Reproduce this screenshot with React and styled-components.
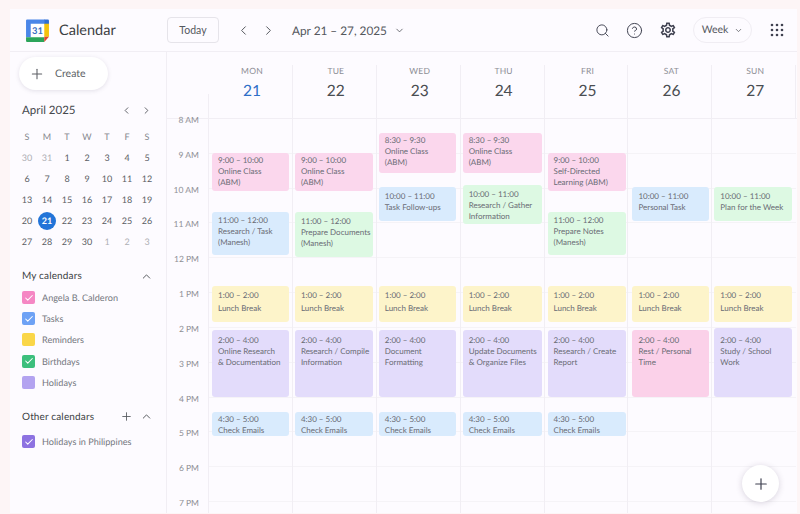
import React from "react"
import styled, { createGlobalStyle } from "styled-components"
import { ChevronLeft, ChevronRight, ChevronDown, ChevronUp, Plus, Search, CircleHelp, Check } from "lucide-react"
import { MdOutlineSettings } from "react-icons/md"

const PINK = "#fbd7ed"
const BLUE = "#d9ebfd"
const GREEN = "#ddf9e3"
const YELLOW = "#fdf4ca"
const PURPLE = "#e3dcfb"

const HOUR = 34.82
const hours = ["8 AM", "9 AM", "10 AM", "11 AM", "12 PM", "1 PM", "2 PM", "3 PM", "4 PM", "5 PM", "6 PM", "7 PM"]

const lunch = { top: 167, height: 36, color: YELLOW, lines: ["1:00 – 2:00", "Lunch Break"], gap: 2, pad: 4 }
const emails = { top: 293, height: 24, color: BLUE, lines: ["4:30 – 5:00", "Check Emails"], pad: 2 }
const work = (color, a, b, top = 211, height = 67, pad = 5) => ({
  top, height, color, lines: ["2:00 – 4:00", a, b], pad
})

const days = [
  {
    name: "MON", num: 21, today: true, left: 3, right: 4,
    events: [
      { top: 34, height: 38, color: PINK, lines: ["9:00 – 10:00", "Online Class", "(ABM)"], pad: 2 },
      { top: 93, height: 43, color: BLUE, lines: ["11:00 – 12:00", "Research / Task", "(Manesh)"], pad: 3 },
      lunch, work(PURPLE, "Online Research", "& Documentation"), emails
    ]
  },
  {
    name: "TUE", num: 22, left: 2, right: 4,
    events: [
      { top: 34, height: 38, color: PINK, lines: ["9:00 – 10:00", "Online Class", "(ABM)"], pad: 2 },
      { top: 93, height: 45, color: GREEN, lines: ["11:00 – 12:00", "Prepare Documents", "(Manesh)"], pad: 4 },
      lunch, work(PURPLE, "Research / Compile", "Information"), emails
    ]
  },
  {
    name: "WED", num: 23, left: 2, right: 5,
    events: [
      { top: 14, height: 40, color: PINK, lines: ["8:30 – 9:30", "Online Class", "(ABM)"], pad: 2 },
      { top: 68, height: 34, color: BLUE, lines: ["10:00 – 11:00", "Task Follow-ups"], pad: 4 },
      lunch, work(PURPLE, "Document", "Formatting"), emails
    ]
  },
  {
    name: "THU", num: 24, left: 2, right: 3,
    events: [
      { top: 14, height: 40, color: PINK, lines: ["8:30 – 9:30", "Online Class", "(ABM)"], pad: 2 },
      { top: 66, height: 39, color: GREEN, lines: ["10:00 – 11:00", "Research / Gather", "Information"], pad: 4 },
      lunch, work(PURPLE, "Update Documents", "& Organize Files"), emails
    ]
  },
  {
    name: "FRI", num: 25, left: 3, right: 2,
    events: [
      { top: 34, height: 38, color: PINK, lines: ["9:00 – 10:00", "Self-Directed", "Learning (ABM)"], pad: 2 },
      { top: 93, height: 43, color: GREEN, lines: ["11:00 – 12:00", "Prepare Notes", "(Manesh)"], pad: 3 },
      lunch, work(PURPLE, "Research / Create", "Report"), emails
    ]
  },
  {
    name: "SAT", num: 26, left: 4, right: 3,
    events: [
      { top: 68, height: 34, color: BLUE, lines: ["10:00 – 11:00", "Personal Task"], pad: 4 },
      lunch, work("#fbd1e9", "Rest / Personal", "Time")
    ]
  },
  {
    name: "SUN", num: 27, left: 2, right: 4,
    events: [
      { top: 68, height: 34, color: GREEN, lines: ["10:00 – 11:00", "Plan for the Week"], pad: 4 },
      lunch, work(PURPLE, "Study / School", "Work", 209, 69, 7)
    ]
  }
]

const miniWeeks = [
  [30, 31, 1, 2, 3, 4, 5],
  [6, 7, 8, 9, 10, 11, 12],
  [13, 14, 15, 16, 17, 18, 19],
  [20, 21, 22, 23, 24, 25, 26],
  [27, 28, 29, 30, 1, 2, 3]
]

const myCalendars = [
  { label: "Angela B. Calderon", color: "#f587c4", checked: true },
  { label: "Tasks", color: "#6ea2f5", checked: true },
  { label: "Reminders", color: "#fad648" },
  { label: "Birthdays", color: "#3cbf7c", checked: true },
  { label: "Holidays", color: "#b3a3f0" }
]

const GlobalStyle = createGlobalStyle`
  html, body {
    margin: 0;
    height: 100%;
    overflow: hidden;
  }
  body {
    background: #fdf5f6;
    font-family: "Lato", "Noto Sans", sans-serif;
    text-rendering: geometricPrecision;
    color: #3c4043;
  }
`

const Page = styled.div`
  box-sizing: border-box;
  width: 800px;
  height: 514px;
  padding: 9px 3px 1px 10px;
`

const Frame = styled.div`
  height: 100%;
  display: flex;
  flex-direction: column;
  background: #fdfbff;
  overflow: hidden;
  position: relative;
`

const TopBar = styled.header`
  flex: 0 0 43px;
  box-sizing: border-box;
  display: flex;
  align-items: center;
  border-bottom: 1px solid #f1eef4;
  padding: 0 13px 0 15px;
`

const Brand = styled.div`
  width: 142px;
  display: flex;
  align-items: center;
  gap: 9px;
  font-size: 14.5px;
  color: #3c4043;
`

const TodayButton = styled.button`
  width: 52px;
  height: 26px;
  margin-right: 12px;
  padding: 0;
  background: transparent;
  border: 1px solid #e6e4ea;
  border-radius: 4px;
  font: inherit;
  font-size: 10.5px;
  color: #55585e;
`

const IconButton = styled.span`
  width: ${props => props.$width || 25}px;
  display: flex;
  justify-content: center;
  align-items: center;
  color: ${props => props.$color || "#55585e"};
`

const DateRange = styled.div`
  margin-left: 11px;
  width: 100px;
  font-size: 11.8px;
  color: #55585e;
  white-space: nowrap;
`

const Spacer = styled.div`
  flex: 1;
`

const WeekPill = styled.div`
  box-sizing: border-box;
  width: 59px;
  height: 26px;
  margin: 0 18px 0 7px;
  display: flex;
  align-items: center;
  justify-content: center;
  gap: 6px;
  border: 1px solid #f0edf3;
  border-radius: 13px;
  font-size: 10.5px;
  color: #55585e;
`

const Body = styled.div`
  flex: 1;
  display: flex;
  min-height: 0;
`

const Sidebar = styled.aside`
  flex: 0 0 157px;
  min-width: 0;
  box-sizing: border-box;
  border-right: 1px solid #f1eef4;
  padding: 5px 10px 0 9px;
`

const CreateButton = styled.div`
  width: 89px;
  height: 33px;
  display: flex;
  align-items: center;
  gap: 10px;
  padding-left: 10px;
  box-sizing: border-box;
  background: #fff;
  border-radius: 17px;
  box-shadow: 0 1px 4px rgba(90, 80, 110, 0.16);
  font-size: 10.5px;
  color: #5c5f65;
`

const MonthRow = styled.div`
  margin: 13px 0 0 3px;
  height: 14px;
  display: flex;
  align-items: center;
  font-size: 11.5px;
  color: #45484d;
`

const MonthTitle = styled.span`
  flex: 1;
`

const MiniGrid = styled.div`
  display: grid;
  grid-template-columns: repeat(7, 20px);
  grid-auto-rows: 21px;
  margin: 9px 0 0 -2px;
  font-size: 9px;
  text-align: center;
`

const MiniCell = styled.div`
  display: flex;
  align-items: center;
  justify-content: center;
  color: ${props => (props.$muted ? "#adafb4" : props.$head ? "#85878d" : "#5a5d63")};
`

const MiniToday = styled.span`
  width: 18px;
  height: 18px;
  display: flex;
  align-items: center;
  justify-content: center;
  border-radius: 50%;
  background: #2274d8;
  color: #fff;
  font-weight: 700;
`

const SectionTitle = styled.div`
  margin: ${props => props.$margin};
  height: 14px;
  display: flex;
  align-items: center;
  padding-left: 3px;
  font-size: 10px;
  letter-spacing: 0.15px;
  color: #3c3f44;
`

const SectionLabel = styled.span`
  flex: 1;
`

const CalendarRow = styled.div`
  height: 21.2px;
  margin-left: 3px;
  display: flex;
  align-items: center;
  gap: 7px;
  font-size: 9.1px;
  color: #74777e;
  white-space: nowrap;
`

const Swatch = styled.span`
  width: 13px;
  height: 13px;
  border-radius: 2px;
  display: flex;
  align-items: center;
  justify-content: center;
  color: #fff;
  background: ${props => props.$color};
`

const Main = styled.main`
  flex: 1;
  display: flex;
  flex-direction: column;
  min-width: 0;
`

const WeekHead = styled.div`
  flex: 0 0 67px;
  display: grid;
  grid-template-columns: 42px repeat(7, 83.9px);
  box-sizing: border-box;
  padding-top: 13px;
  border-bottom: 1px solid #f1eef4;
`

const CornerCell = styled.div`
  align-self: end;
  height: 24px;
  border-right: 1px solid #f1eef4;
`

const DayHeadCell = styled.div`
  display: flex;
  flex-direction: column;
  align-items: center;
  padding-left: 3px;
  border-right: 1px solid #f1eef4;
`

const DayName = styled.div`
  font-size: 8.5px;
  line-height: 12px;
  letter-spacing: 0.2px;
  color: #8d8f96;
`

const DayNum = styled.div`
  margin-top: 4px;
  font-size: 15.5px;
  line-height: 20px;
  color: ${props => (props.$today ? "#2e6fc7" : "#4a4d52")};
`

const TimeGrid = styled.div`
  flex: 1;
  display: grid;
  grid-template-columns: 42px repeat(7, 83.9px);
  min-height: 0;
`

const Gutter = styled.div`
  position: relative;
`

const HourLabel = styled.div`
  height: ${HOUR}px;
  padding-right: 10px;
  text-align: right;
  font-size: 8.5px;
  line-height: 1;
  color: #8d8f95;
  transform: translateY(-3px);
`

const DayColumn = styled.div`
  position: relative;
  border-left: 1px solid #f1eef4;
  margin-left: -1px;
  background: repeating-linear-gradient(
    to bottom,
    transparent 0,
    transparent ${HOUR - 1}px,
    #f5f3f7 ${HOUR - 1}px,
    #f5f3f7 ${HOUR}px
  );
`

const EventCard = styled.div`
  position: absolute;
  top: ${props => props.$top}px;
  height: ${props => props.$height}px;
  left: ${props => props.$left}px;
  right: ${props => props.$right}px;
  box-sizing: border-box;
  padding: ${props => props.$pad}px 0 0 6px;
  background: ${props => props.$color};
  border-radius: 3px;
  font-size: 8px;
  line-height: 10.9px;
  color: #6a6c75;
  white-space: nowrap;
  overflow: hidden;
`

const EventLine = styled.div`
  margin-top: ${props => props.$gap || 0}px;
`

const Fab = styled.div`
  position: absolute;
  right: 18px;
  bottom: 11px;
  width: 37px;
  height: 37px;
  border-radius: 50%;
  background: #fff;
  box-shadow: 0 1px 6px rgba(80, 70, 100, 0.22);
  display: flex;
  align-items: center;
  justify-content: center;
  color: #3f4150;
`

const CalendarLogo = () => (
  <svg width="25" height="25" viewBox="0 0 24 24">
    <rect x="5" y="5" width="14" height="14" fill="#fff" />
    <path d="M2 1.5 L19 1.5 V5.5 H5.5 V18.5 H1 V2.5 Q1 1.5 2 1.5Z" fill="#4a86e8" />
    <path d="M18.5 1.5 H22 Q23 1.5 23 2.5 V6 H18.5Z" fill="#2f6fd6" />
    <rect x="18.5" y="5.5" width="4.5" height="12.5" fill="#f4c20d" />
    <path d="M1 18.5 H18.5 V23 H2 Q1 23 1 22Z" fill="#2ca45a" />
    <path d="M18.5 18 H23 L18.5 23Z" fill="#e0492f" />
    <text x="12" y="15.5" textAnchor="middle" fontSize="9" fontWeight="700" fill="#3a6fc4" fontFamily="Lato, sans-serif">31</text>
  </svg>
)

const AppsIcon = () => (
  <svg width="14" height="14" viewBox="0 0 14 14" fill="#3f4150">
    {[2, 7, 12].map(y =>
      [2, 7, 12].map(x => <circle key={`${x}-${y}`} cx={x} cy={y} r="1.3" />)
    )}
  </svg>
)

const CalendarItem = ({ label, color, checked }) => (
  <CalendarRow>
    <Swatch $color={color}>{checked && <Check size={10} strokeWidth={2.5} />}</Swatch>
    {label}
  </CalendarRow>
)

export default function App() {
  return (
    <>
      <GlobalStyle />
      <Page>
        <Frame>
          <TopBar>
            <Brand>
              <CalendarLogo />
              Calendar
            </Brand>
            <TodayButton>Today</TodayButton>
            <IconButton><ChevronLeft size={15} strokeWidth={1.6} /></IconButton>
            <IconButton><ChevronRight size={15} strokeWidth={1.6} /></IconButton>
            <DateRange>Apr 21 – 27, 2025</DateRange>
            <IconButton $width={14}><ChevronDown size={11} strokeWidth={1.8} /></IconButton>
            <Spacer />
            <IconButton $width={32} $color="#3f4150"><Search size={15} strokeWidth={1.5} /></IconButton>
            <IconButton $width={32} $color="#3f4150"><CircleHelp size={17} strokeWidth={1.4} /></IconButton>
            <IconButton $width={36} $color="#3f4150"><MdOutlineSettings size={18} /></IconButton>
            <WeekPill>
              Week
              <ChevronDown size={9} strokeWidth={2} />
            </WeekPill>
            <IconButton $width={14}><AppsIcon /></IconButton>
          </TopBar>
          <Body>
            <Sidebar>
              <CreateButton>
                <Plus size={16} strokeWidth={1.6} />
                Create
              </CreateButton>
              <MonthRow>
                <MonthTitle>April 2025</MonthTitle>
                <IconButton $width={20}><ChevronLeft size={11} strokeWidth={2} /></IconButton>
                <IconButton $width={20}><ChevronRight size={11} strokeWidth={2} /></IconButton>
              </MonthRow>
              <MiniGrid>
                {["S", "M", "T", "W", "T", "F", "S"].map((d, i) => (
                  <MiniCell key={i} $head>{d}</MiniCell>
                ))}
                {miniWeeks.map((week, w) =>
                  week.map((d, i) => {
                    const muted = (w === 0 && d > 20) || (w === 4 && d < 10)
                    return (
                      <MiniCell key={`${w}-${i}`} $muted={muted}>
                        {d === 21 ? <MiniToday>{d}</MiniToday> : d}
                      </MiniCell>
                    )
                  })
                )}
              </MiniGrid>
              <SectionTitle $margin="17px 0 4px">
                <SectionLabel>My calendars</SectionLabel>
                <IconButton $width={20}><ChevronUp size={13} strokeWidth={1.8} /></IconButton>
              </SectionTitle>
              {myCalendars.map(c => (
                <CalendarItem key={c.label} {...c} />
              ))}
              <SectionTitle $margin="17px 0 7px">
                <SectionLabel>Other calendars</SectionLabel>
                <IconButton $width={20}><Plus size={13} strokeWidth={1.6} /></IconButton>
                <IconButton $width={20}><ChevronUp size={13} strokeWidth={1.8} /></IconButton>
              </SectionTitle>
              <CalendarItem label="Holidays in Philippines" color="#8d72e1" checked />
            </Sidebar>
            <Main>
              <WeekHead>
                <CornerCell />
                {days.map(d => (
                  <DayHeadCell key={d.name}>
                    <DayName>{d.name}</DayName>
                    <DayNum $today={d.today}>{d.num}</DayNum>
                  </DayHeadCell>
                ))}
              </WeekHead>
              <TimeGrid>
                <Gutter>
                  {hours.map(h => (
                    <HourLabel key={h}>{h}</HourLabel>
                  ))}
                </Gutter>
                {days.map(d => (
                  <DayColumn key={d.name}>
                    {d.events.map((ev, i) => (
                      <EventCard
                        key={i}
                        $top={ev.top}
                        $height={ev.height}
                        $left={d.left}
                        $right={d.right}
                        $color={ev.color}
                        $pad={ev.pad}
                      >
                        {ev.lines.map((line, j) => (
                          <EventLine key={j} $gap={j === 1 ? ev.gap : 0}>{line}</EventLine>
                        ))}
                      </EventCard>
                    ))}
                  </DayColumn>
                ))}
              </TimeGrid>
            </Main>
          </Body>
          <Fab><Plus size={18} strokeWidth={1.6} /></Fab>
        </Frame>
      </Page>
    </>
  )
}
